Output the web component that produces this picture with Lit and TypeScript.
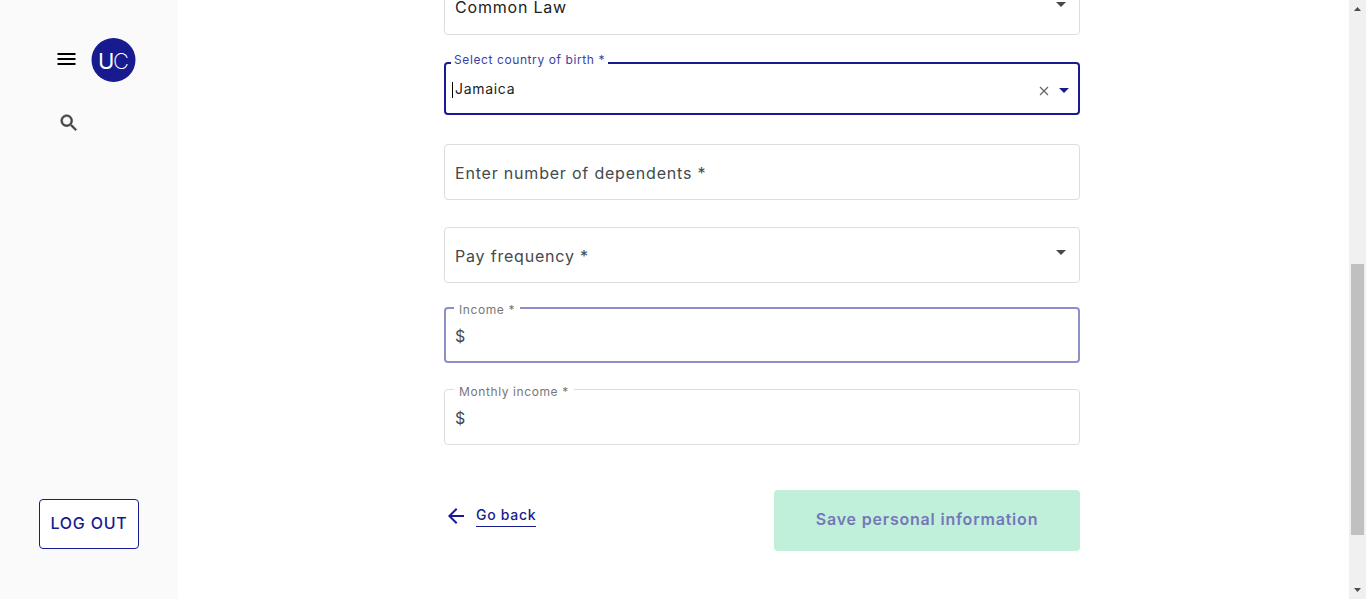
import { LitElement, html, css, svg, nothing } from "lit";
import { customElement, property } from "lit/decorators.js";

const caret = html`<svg class="arrow" viewBox="0 0 10 5" aria-hidden="true"><path d="M0 0h10L5 5z" /></svg>`;

@customElement("app-sidebar")
class AppSidebar extends LitElement {
  static styles = css`
    :host {
      display: flex;
      flex-direction: column;
      align-items: flex-start;
      box-sizing: border-box;
      padding: 38px 39px 50px;
      background: #fafafa;
    }
    button {
      font: inherit;
      letter-spacing: 0.05em;
      border: 0;
      padding: 0;
      background: none;
      cursor: pointer;
    }
    .brand {
      display: flex;
      align-items: center;
      gap: 13px;
      padding-left: 15px;
    }
    .icon {
      display: block;
      width: 24px;
      height: 24px;
    }
    .menu {
      padding-bottom: 2px;
    }
    .logo {
      display: block;
      width: 45px;
      height: 44px;
    }
    .logo text {
      font-family: Inter, "Liberation Sans", sans-serif;
      fill: #fff;
      letter-spacing: 0;
    }
    .search {
      margin: 30px 0 0 19px;
      color: #444;
    }
    .search .icon {
      width: 22px;
      height: 22px;
      stroke: currentColor;
      stroke-width: 0.5;
    }
    .logout {
      margin-top: auto;
      width: 100px;
      height: 50px;
      padding-bottom: 2px;
      border: 1px solid #181b8f;
      border-radius: 4px;
      background: #fff;
      color: #181b8f;
      font-size: 16px;
      font-weight: 500;
    }
  `;

  render() {
    return html`
      <div class="brand">
        <button class="menu" aria-label="Menu">
          <svg class="icon" viewBox="0 0 24 24"><path d="M3.500 18h18v-2h-18v2zm0-5h18v-2h-18v2zm0-7v2h18V6h-18z" /></svg>
        </button>
        <svg class="logo" viewBox="0 0 45 44" role="img" aria-label="UC">
          <circle cx="22.500" cy="22" r="22" fill="#181b8f" />
          <text x="7" y="31" font-size="22" font-weight="400">U</text>
          <text x="22" y="31" font-size="22" font-weight="200">C</text>
        </svg>
      </div>
      <button class="search" aria-label="Search">
        <svg class="icon" viewBox="0 0 24 24" fill="currentColor">
          <path
            d="M15.5 14h-.79l-.28-.27C15.41 12.59 16 11.11 16 9.5 16 5.91 13.09 3 9.5 3S3 5.91 3 9.5 5.91 16 9.5 16c1.61 0 3.09-.59 4.23-1.57l.27.28v.79l5 4.99L20.49 19l-4.99-5zm-6 0C7.01 14 5 11.99 5 9.5S7.01 5 9.5 5 14 7.01 14 9.5 11.99 14 9.5 14z"
          />
        </svg>
      </button>
      <button class="logout">LOG OUT</button>
    `;
  }
}

@customElement("form-field")
class FormField extends LitElement {
  @property() kind = "text";
  @property() label = "";
  @property() value = "";
  @property() prefixText = "";
  @property({ type: Boolean, reflect: true }) raised = false;

  static styles = css`
    :host {
      display: block;
    }
    .box {
      position: relative;
      display: flex;
      align-items: center;
      box-sizing: border-box;
      height: 56px;
      padding: 2px 0 0 10px;
      border: 1px solid #dcdedd;
      border-radius: 4px;
      background: #fff;
      color: #43494d;
      font-size: 16px;
      letter-spacing: 0.05em;
    }
    :host([kind="select"]) .box {
      padding-top: 0;
    }
    :host([tone="active"]) .box {
      border: 2px solid #8e8fc9;
      padding-left: 9px;
    }
    :host([tone="focus"]) .box {
      height: 53px;
      border: 2px solid #181b8f;
      padding: 0 9px 0 6px;
      font-size: 14px;
      color: #222;
    }
    .label {
      position: absolute;
      left: 10px;
      top: 50%;
      line-height: 20px;
      margin-top: -9px;
      pointer-events: none;
    }
    :host([raised]) .label {
      left: 9px;
      top: -8px;
      margin: 0;
      padding: 0 5px;
      background: #fff;
      color: #777;
      font-size: 12px;
      line-height: 20px;
      letter-spacing: 0.05em;
    }
    :host([raised][tone="active"]) .label {
      left: 8px;
      top: -9px;
    }
    :host([raised][tone="focus"]) .label {
      left: 5px;
      top: -14px;
      padding: 0 3px;
      color: #3c3ea3;
    }
    input,
    select {
      flex: 1;
      min-width: 0;
      height: 40px;
      border: 0;
      padding: 0;
      margin: 0;
      outline: 0;
      appearance: none;
      background: none;
      color: #222;
      font: inherit;
      letter-spacing: inherit;
    }
    .arrow {
      flex: none;
      width: 10px;
      height: 5px;
      margin: 0 13px 6px 0;
      fill: #43494d;
      pointer-events: none;
    }
    :host([tone="focus"]) .arrow {
      margin: 4px 0 0;
      fill: #181b8f;
    }
    .bar {
      width: 1px;
      height: 16px;
      margin: 2px 2px 0 0;
      background: #000;
    }
    .clear {
      display: flex;
      padding: 0;
      margin: 4px 10px 0 0;
      border: 0;
      background: none;
    }
    .clear svg {
      width: 10px;
      height: 10px;
      stroke: #666;
      stroke-width: 1.25;
      fill: none;
    }
  `;

  private control() {
    if (this.kind === "select") {
      return html`<select id="control" aria-label=${this.label}>
          <option>${this.value}</option>
        </select>
        ${caret}`;
    }
    if (this.kind === "combo") {
      return html`<span class="bar"></span><input id="control" role="combobox" aria-expanded="false" .value=${this.value} />
        <button class="clear" type="button" aria-label="Clear">
          <svg viewBox="0 0 10 10">${svg`<path d="M1 1l8 8M9 1L1 9" />`}</svg>
        </button>
        ${caret}`;
    }
    return html`<input id="control" .value=${this.value} />`;
  }

  render() {
    const showLabel = this.kind !== "select" || !this.value;
    return html`<div class="box">
      ${showLabel ? html`<label class="label" for="control">${this.label}</label>` : nothing}
      ${this.prefixText ? html`<span>${this.prefixText}</span>` : nothing} ${this.control()}
    </div>`;
  }
}

@customElement("app-root")
class AppRoot extends LitElement {
  static styles = css`
    :host {
      display: grid;
      grid-template-columns: 178px minmax(0, 1fr) 17px;
      height: 100vh;
      overflow: hidden;
      background: #fff;
      font-family: Inter, "Liberation Sans", sans-serif;
    }
    main {
      overflow: hidden;
      padding: 0 3px 0 0;
    }
    form {
      display: flex;
      flex-direction: column;
      max-width: 636px;
      margin: -21px auto 0;
    }
    .status,
    .dependents {
      margin-bottom: 27px;
    }
    .country {
      margin-bottom: 29px;
    }
    .frequency {
      margin-bottom: 24px;
    }
    .income {
      margin-bottom: 26px;
    }
    .actions {
      display: flex;
      justify-content: space-between;
      align-items: center;
      margin-top: 45px;
    }
    .back {
      display: flex;
      align-items: center;
      gap: 8px;
      margin-bottom: 10px;
      color: #181b8f;
      font-size: 14px;
      font-weight: 500;
      letter-spacing: 0.05em;
      text-decoration: none;
    }
    .back svg {
      width: 24px;
      height: 24px;
      fill: currentColor;
    }
    .back span {
      line-height: 22px;
      border-bottom: 1px solid currentColor;
    }
    .save {
      width: 306px;
      height: 61px;
      padding: 0 0 4px;
      border: 0;
      border-radius: 4px;
      background: #c0f0d9;
      color: #7577bb;
      font: inherit;
      font-size: 16px;
      font-weight: 600;
      letter-spacing: 0.05em;
    }
    .scrollbar {
      display: grid;
      grid-template-rows: 264fr 271fr 64fr;
      justify-items: center;
      background: #f0f0f0;
    }
    .thumb {
      width: 13px;
      background: #c0c0c0;
    }
    .tick {
      width: 7px;
      height: 4px;
      margin: 7px 0;
      fill: #4d4d4d;
    }
    .end {
      align-self: end;
    }
  `;

  render() {
    return html`
      <app-sidebar></app-sidebar>
      <main>
        <form>
          <form-field class="status" kind="select" label="Marital status" value="Common Law"></form-field>
          <form-field class="country" kind="combo" tone="focus" raised label="Select country of birth *" value="Jamaica"></form-field>
          <form-field class="dependents" label="Enter number of dependents *"></form-field>
          <form-field class="frequency" kind="select" label="Pay frequency *"></form-field>
          <form-field class="income" tone="active" raised label="Income *" prefixText="$"></form-field>
          <form-field raised label="Monthly income *" prefixText="$"></form-field>
          <div class="actions">
            <a class="back" href="#">
              <svg viewBox="0 0 24 24" aria-hidden="true">
                <path d="M20 11H7.83l5.59-5.59L12 4l-8 8 8 8 1.41-1.41L7.83 13H20v-2z" />
              </svg>
              <span>Go back</span>
            </a>
            <button class="save" type="button">Save personal information</button>
          </div>
        </form>
      </main>
      <div class="scrollbar" aria-hidden="true">
        <svg class="tick" viewBox="0 0 7 4"><path d="M0 4h7L3.500 0z" /></svg>
        <div class="thumb"></div>
        <svg class="tick end" viewBox="0 0 7 4"><path d="M0 0h7L3.500 4z" /></svg>
      </div>
    `;
  }
}
